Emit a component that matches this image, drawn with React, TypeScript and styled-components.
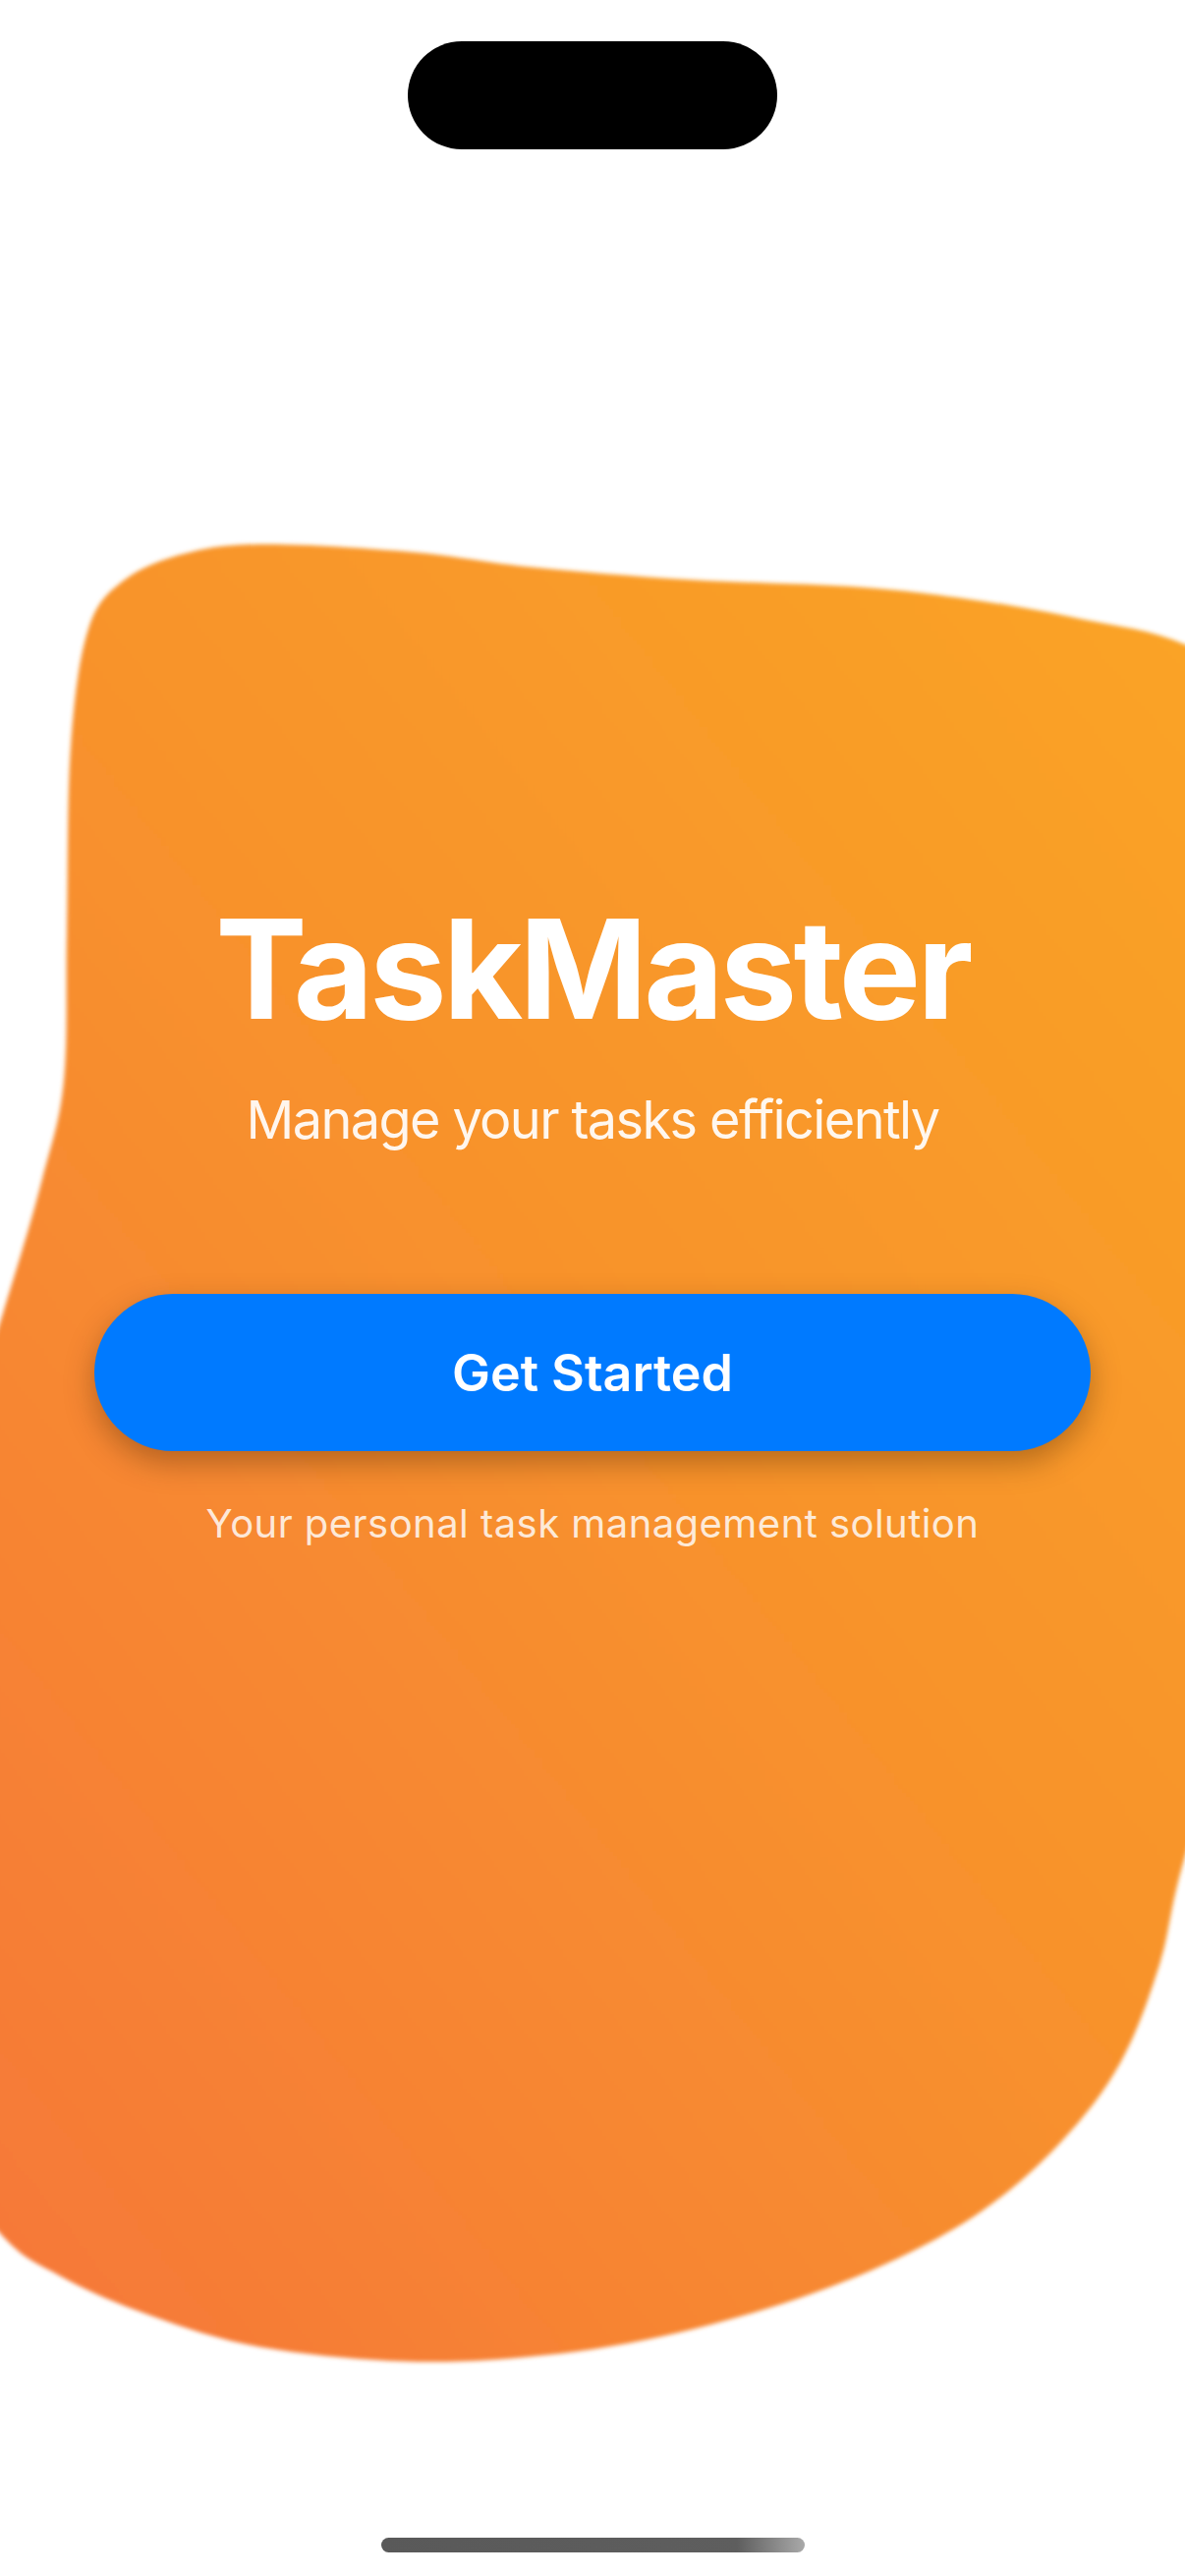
import React from "react";
import styled, { createGlobalStyle } from "styled-components";

const GlobalStyle = createGlobalStyle`
  html, body {
    margin: 0;
    padding: 0;
    background: #ffffff;
  }
  body {
    font-family: Inter, "Noto Sans", "Liberation Sans", sans-serif;
    -webkit-font-smoothing: antialiased;
  }
`;

const Screen = styled.div`
  position: relative;
  width: 1206px;
  height: 2622px;
  overflow: hidden;
  background: #ffffff;
  display: flex;
  flex-direction: column;
  align-items: center;
`;

const BlobCanvas = styled.svg`
  position: absolute;
  left: 0;
  top: 0;
  width: 1206px;
  height: 2622px;
  z-index: 0;
  pointer-events: none;
`;

const StatusArea = styled.div`
  position: relative;
  z-index: 1;
  width: 100%;
  padding-top: 42px;
  display: flex;
  justify-content: center;
`;

const DynamicIsland = styled.div`
  width: 376px;
  height: 110px;
  border-radius: 55px;
  background: #000000;
`;

const Content = styled.main`
  position: relative;
  z-index: 1;
  margin-top: 764px;
  display: flex;
  flex-direction: column;
  align-items: center;
  width: 100%;
`;

const Title = styled.h1`
  margin: 0;
  font-family: Inter, "Liberation Sans", sans-serif;
  font-weight: 700;
  font-size: 140px;
  line-height: 140px;
  letter-spacing: -3.7px;
  color: #ffffff;
`;

const Subtitle = styled.p`
  margin: 57px 0 0;
  font-family: Inter, "Liberation Sans", sans-serif;
  font-weight: 400;
  font-size: 54px;
  line-height: 54px;
  letter-spacing: -1.6px;
  color: rgba(255, 255, 255, 0.92);
`;

const PrimaryButton = styled.button`
  margin-top: 150px;
  width: 1014px;
  height: 160px;
  border: none;
  border-radius: 80px;
  background: #007aff;
  color: #ffffff;
  font-family: Inter, "Liberation Sans", sans-serif;
  font-weight: 600;
  font-size: 52px;
  display: flex;
  align-items: center;
  justify-content: center;
  box-shadow: 0 12px 30px rgba(60, 30, 0, 0.35);
  cursor: pointer;
`;

const Caption = styled.p`
  margin: 54px 0 0;
  font-family: Inter, "Liberation Sans", sans-serif;
  font-weight: 400;
  font-size: 40px;
  line-height: 40px;
  letter-spacing: 0.45px;
  color: rgba(255, 255, 255, 0.82);
`;

const Spacer = styled.div`
  flex: 1;
`;

const HomeIndicator = styled.div`
  position: relative;
  z-index: 1;
  width: 431px;
  height: 15px;
  margin-bottom: 24px;
  border-radius: 8px;
  background: linear-gradient(90deg, #595959 0%, #5e5e5e 84%, #a9a9a9 100%);
`;

type Pt = [number, number];

const blobPoints: Pt[] = [
  [270, 554],
  [420, 562],
  [538, 577],
  [700, 590],
  [880, 598],
  [1000, 612],
  [1100, 630],
  [1206, 656],
  [1300, 720],
  [1330, 1200],
  [1280, 1660],
  [1206, 1890],
  [1180, 2000],
  [1140, 2100],
  [1080, 2180],
  [1000, 2250],
  [900, 2305],
  [780, 2350],
  [640, 2385],
  [500, 2402],
  [380, 2402],
  [250, 2386],
  [140, 2352],
  [60, 2316],
  [0, 2273],
  [-90, 2150],
  [-110, 1700],
  [3, 1337],
  [43, 1200],
  [65, 1100],
  [68, 950],
  [72, 760],
  [90, 640],
  [127, 590],
  [190, 563],
];

function smoothClosedPath(pts: Pt[]): string {
  const n = pts.length;
  const f = (v: number) => v.toFixed(1);
  let d = `M ${f(pts[0][0])} ${f(pts[0][1])}`;
  for (let i = 0; i < n; i++) {
    const p0 = pts[(i - 1 + n) % n];
    const p1 = pts[i];
    const p2 = pts[(i + 1) % n];
    const p3 = pts[(i + 2) % n];
    const c1x = p1[0] + (p2[0] - p0[0]) / 6;
    const c1y = p1[1] + (p2[1] - p0[1]) / 6;
    const c2x = p2[0] - (p3[0] - p1[0]) / 6;
    const c2y = p2[1] - (p3[1] - p1[1]) / 6;
    d += ` C ${f(c1x)} ${f(c1y)}, ${f(c2x)} ${f(c2y)}, ${f(p2[0])} ${f(p2[1])}`;
  }
  return d + " Z";
}

const blobPath = smoothClosedPath(blobPoints);

function Blob() {
  return (
    <BlobCanvas viewBox="0 0 1206 2622" aria-hidden="true">
      <defs>
        <linearGradient id="blobFill" x1="1" y1="0" x2="0" y2="1">
          <stop offset="0" stopColor="#FAA624" />
          <stop offset="0.5" stopColor="#F8912D" />
          <stop offset="1" stopColor="#F6753A" />
        </linearGradient>
        <filter id="blobSoft" x="-5%" y="-5%" width="110%" height="110%">
          <feGaussianBlur stdDeviation="2.2" />
        </filter>
      </defs>
      <path d={blobPath} fill="url(#blobFill)" filter="url(#blobSoft)" />
    </BlobCanvas>
  );
}

export default function App() {
  return (
    <>
      <GlobalStyle />
      <Screen>
        <Blob />
        <StatusArea>
          <DynamicIsland />
        </StatusArea>
        <Content>
          <Title>TaskMaster</Title>
          <Subtitle>Manage your tasks efficiently</Subtitle>
          <PrimaryButton type="button">Get Started</PrimaryButton>
          <Caption>Your personal task management solution</Caption>
        </Content>
        <Spacer />
        <HomeIndicator />
      </Screen>
    </>
  );
}
